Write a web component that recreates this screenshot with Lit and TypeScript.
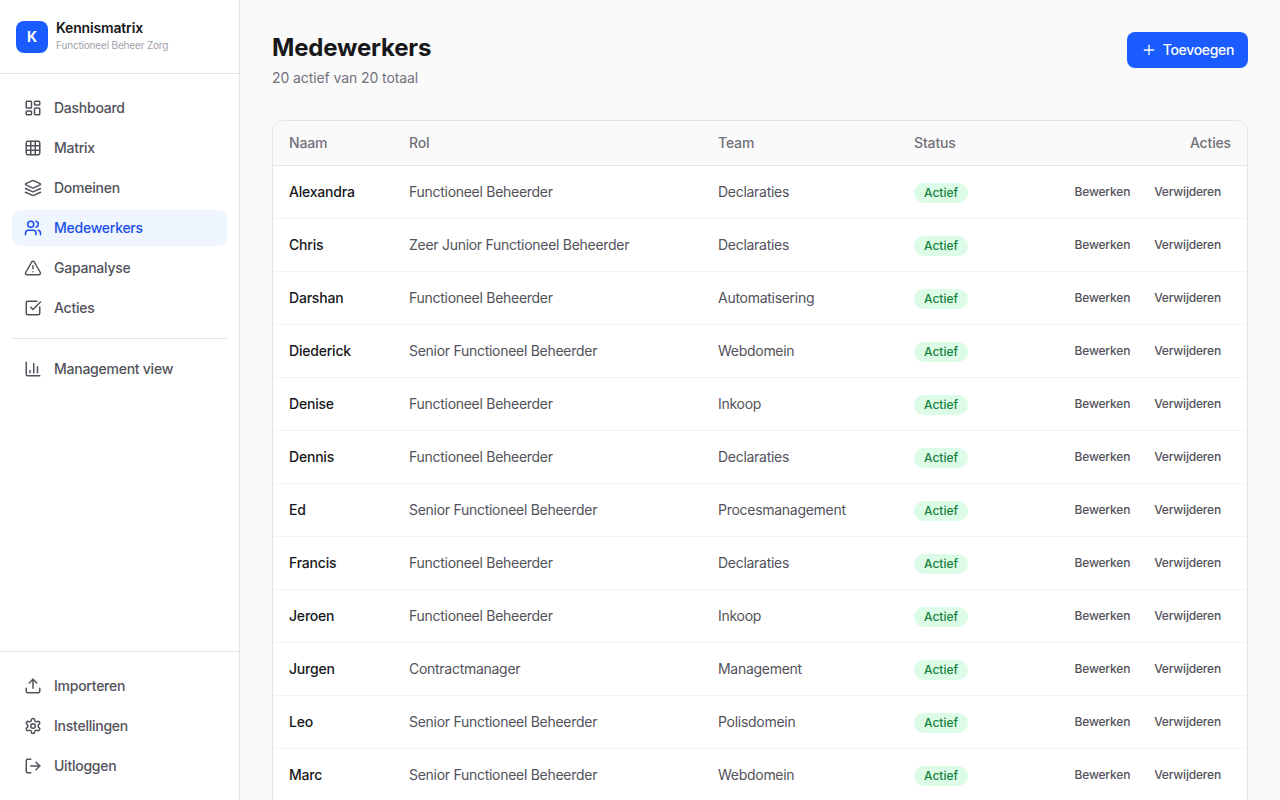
import { LitElement, css, html, svg } from "lit";
import { customElement } from "lit/decorators.js";

const icon = (body: unknown, size = 18) => html`
  <svg class="icon" width=${size} height=${size} viewBox="0 0 24 24" fill="none" stroke="currentColor"
    stroke-width="2" stroke-linecap="round" stroke-linejoin="round">${body}</svg>
`;

const icons = {
  dashboard: svg`<rect x="3" y="3" width="7" height="9" rx="1"/><rect x="14" y="3" width="7" height="5" rx="1"/><rect x="14" y="12" width="7" height="9" rx="1"/><rect x="3" y="16" width="7" height="5" rx="1"/>`,
  grid: svg`<rect x="3" y="3" width="18" height="18" rx="2"/><path d="M3 9h18"/><path d="M3 15h18"/><path d="M9 3v18"/><path d="M15 3v18"/>`,
  layers: svg`<path d="m12.83 2.18a2 2 0 0 0-1.66 0L2.6 6.08a1 1 0 0 0 0 1.83l8.58 3.91a2 2 0 0 0 1.66 0l8.58-3.9a1 1 0 0 0 0-1.83Z"/><path d="m22 17.65-9.17 4.16a2 2 0 0 1-1.66 0L2 17.65"/><path d="m22 12.65-9.17 4.16a2 2 0 0 1-1.66 0L2 12.65"/>`,
  users: svg`<path d="M16 21v-2a4 4 0 0 0-4-4H6a4 4 0 0 0-4 4v2"/><circle cx="9" cy="7" r="4"/><path d="M22 21v-2a4 4 0 0 0-3-3.87"/><path d="M16 3.13a4 4 0 0 1 0 7.75"/>`,
  alert: svg`<path d="m21.73 18-8-14a2 2 0 0 0-3.48 0l-8 14A2 2 0 0 0 4 21h16a2 2 0 0 0 1.73-3"/><path d="M12 9v4"/><path d="M12 17h.01"/>`,
  check: svg`<path d="M21 10.656V19a2 2 0 0 1-2 2H5a2 2 0 0 1-2-2V5a2 2 0 0 1 2-2h12.344"/><path d="m9 11 3 3L22 4"/>`,
  chart: svg`<path d="M3 3v16a2 2 0 0 0 2 2h16"/><path d="M18 17V9"/><path d="M13 17V5"/><path d="M8 17v-3"/>`,
  upload: svg`<path d="M21 15v4a2 2 0 0 1-2 2H5a2 2 0 0 1-2-2v-4"/><polyline points="17 8 12 3 7 8"/><line x1="12" y1="3" x2="12" y2="15"/>`,
  settings: svg`<path d="M12.22 2h-.44a2 2 0 0 0-2 2v.18a2 2 0 0 1-1 1.73l-.43.25a2 2 0 0 1-2 0l-.15-.08a2 2 0 0 0-2.73.73l-.22.38a2 2 0 0 0 .73 2.73l.15.1a2 2 0 0 1 1 1.72v.51a2 2 0 0 1-1 1.74l-.15.09a2 2 0 0 0-.73 2.73l.22.38a2 2 0 0 0 2.73.73l.15-.08a2 2 0 0 1 2 0l.43.25a2 2 0 0 1 1 1.73V20a2 2 0 0 0 2 2h.44a2 2 0 0 0 2-2v-.18a2 2 0 0 1 1-1.73l.43-.25a2 2 0 0 1 2 0l.15.08a2 2 0 0 0 2.73-.73l.22-.39a2 2 0 0 0-.73-2.73l-.15-.08a2 2 0 0 1-1-1.74v-.5a2 2 0 0 1 1-1.74l.15-.09a2 2 0 0 0 .73-2.73l-.22-.38a2 2 0 0 0-2.73-.73l-.15.08a2 2 0 0 1-2 0l-.43-.25a2 2 0 0 1-1-1.73V4a2 2 0 0 0-2-2z"/><circle cx="12" cy="12" r="3"/>`,
  logout: svg`<path d="M9 21H5a2 2 0 0 1-2-2V5a2 2 0 0 1 2-2h4"/><polyline points="16 17 21 12 16 7"/><line x1="21" y1="12" x2="9" y2="12"/>`,
  plus: svg`<path d="M5 12h14"/><path d="M12 5v14"/>`,
};

const employees = [
  ["Alexandra", "Functioneel Beheerder", "Declaraties"],
  ["Chris", "Zeer Junior Functioneel Beheerder", "Declaraties"],
  ["Darshan", "Functioneel Beheerder", "Automatisering"],
  ["Diederick", "Senior Functioneel Beheerder", "Webdomein"],
  ["Denise", "Functioneel Beheerder", "Inkoop"],
  ["Dennis", "Functioneel Beheerder", "Declaraties"],
  ["Ed", "Senior Functioneel Beheerder", "Procesmanagement"],
  ["Francis", "Functioneel Beheerder", "Declaraties"],
  ["Jeroen", "Functioneel Beheerder", "Inkoop"],
  ["Jurgen", "Contractmanager", "Management"],
  ["Leo", "Senior Functioneel Beheerder", "Polisdomein"],
  ["Marc", "Senior Functioneel Beheerder", "Webdomein"],
];

@customElement("app-root")
export class AppRoot extends LitElement {
  static styles = css`
    :host {
      display: flex;
      height: 100vh;
      overflow: hidden;
      background: #fafafa;
      color: #18181b;
      font-family: Inter, "Liberation Sans", sans-serif;
    }
    .sidebar {
      width: 240px;
      flex: none;
      box-sizing: border-box;
      display: flex;
      flex-direction: column;
      background: #fff;
      border-right: 1px solid #e4e4e7;
    }
    .brand {
      display: flex;
      align-items: center;
      gap: 8px;
      height: 74px;
      box-sizing: border-box;
      padding: 0 16px;
      border-bottom: 1px solid #e4e4e7;
    }
    .logo {
      width: 32px;
      height: 32px;
      border-radius: 8px;
      background: #1a5cff;
      color: #fff;
      font-size: 14px;
      font-weight: 700;
      display: flex;
      align-items: center;
      justify-content: center;
    }
    .brand-text {
      padding-bottom: 3px;
    }
    .brand-name {
      font-size: 14px;
      font-weight: 600;
      line-height: 20px;
      letter-spacing: -0.17px;
    }
    .brand-sub {
      font-size: 10px;
      line-height: 14px;
      color: #a1a1aa;
      letter-spacing: -0.17px;
    }
    nav {
      display: flex;
      flex-direction: column;
      gap: 4px;
      padding: 16px 12px;
    }
    nav.main-nav {
      flex: 1;
    }
    nav.bottom-nav {
      border-top: 1px solid #e4e4e7;
    }
    .item {
      display: flex;
      align-items: center;
      gap: 12px;
      height: 36px;
      padding: 0 12px;
      border-radius: 8px;
      font-size: 14px;
      font-weight: 500;
      color: #52525b;
      letter-spacing: -0.25px;
    }
    .item span {
      padding-bottom: 2px;
    }
    .item.active {
      background: #eff6ff;
      color: #1a4fe8;
    }
    .sep {
      height: 1px;
      background: #e4e4e7;
      margin: 8px 0;
    }
    .icon {
      flex: none;
      display: block;
    }
    main {
      flex: 1;
      min-width: 0;
      padding: 32px 32px 0;
      overflow: hidden;
    }
    .head {
      display: flex;
      justify-content: space-between;
      align-items: flex-start;
      margin-bottom: 32px;
    }
    h1 {
      margin: 0;
      font-size: 24px;
      line-height: 32px;
      font-weight: 700;
      letter-spacing: -0.18px;
    }
    .sub {
      margin-top: 4px;
      font-size: 14px;
      line-height: 20px;
      color: #71717a;
      letter-spacing: -0.09px;
    }
    .add {
      display: flex;
      align-items: center;
      gap: 6px;
      height: 36px;
      padding: 0 14px;
      border: 0;
      border-radius: 8px;
      background: #1a5cff;
      color: #fff;
      font: 500 14px Inter, "Liberation Sans", sans-serif;
      letter-spacing: -0.33px;
    }
    .add span {
      padding-bottom: 2px;
    }
    /* the list runs on below the fold, so the card has no visible bottom edge */
    .card {
      background: #fff;
      border: 1px solid #e4e4e7;
      border-bottom: 0;
      border-radius: 12px 12px 0 0;
      overflow: hidden;
    }
    table {
      width: 100%;
      border-collapse: collapse;
      table-layout: fixed;
      font-size: 14px;
    }
    th {
      height: 42px;
      padding: 0 16px 2px;
      text-align: left;
      font-weight: 500;
      color: #71717a;
      background: #fafafa;
      border-bottom: 1px solid #e4e4e7;
      letter-spacing: -0.15px;
    }
    td {
      height: 50px;
      padding: 0 16px 2px;
      color: #52525b;
      border-bottom: 1px solid #f4f4f5;
      letter-spacing: -0.28px;
    }
    td.name {
      font-weight: 500;
      color: #18181b;
      letter-spacing: -0.2px;
    }
    td.status {
      padding: 2px 16px 0;
    }
    td.buttons {
      padding: 0 16px;
    }
    th.right {
      text-align: right;
    }
    .badge {
      display: inline-block;
      padding: 0 10px;
      border-radius: 999px;
      background: #dcfce7;
      color: #15803d;
      font-size: 12px;
      line-height: 20px;
      font-weight: 500;
      vertical-align: middle;
      letter-spacing: 0;
    }
    .actions {
      display: flex;
      justify-content: flex-end;
      gap: 4px;
    }
    .actions button {
      border: 0;
      background: none;
      padding: 4px 10px;
      color: #52525b;
      font: 500 12px/16px Inter, "Liberation Sans", sans-serif;
      letter-spacing: -0.18px;
    }
  `;

  private navItem(name: string, body: unknown, active = false) {
    return html`<div class="item ${active ? "active" : ""}">${icon(body)}<span>${name}</span></div>`;
  }

  render() {
    return html`
      <aside class="sidebar">
        <div class="brand">
          <div class="logo">K</div>
          <div class="brand-text">
            <div class="brand-name">Kennismatrix</div>
            <div class="brand-sub">Functioneel Beheer Zorg</div>
          </div>
        </div>
        <nav class="main-nav">
          ${this.navItem("Dashboard", icons.dashboard)}
          ${this.navItem("Matrix", icons.grid)}
          ${this.navItem("Domeinen", icons.layers)}
          ${this.navItem("Medewerkers", icons.users, true)}
          ${this.navItem("Gapanalyse", icons.alert)}
          ${this.navItem("Acties", icons.check)}
          <div class="sep"></div>
          ${this.navItem("Management view", icons.chart)}
        </nav>
        <nav class="bottom-nav">
          ${this.navItem("Importeren", icons.upload)}
          ${this.navItem("Instellingen", icons.settings)}
          ${this.navItem("Uitloggen", icons.logout)}
        </nav>
      </aside>
      <main>
        <div class="head">
          <div>
            <h1>Medewerkers</h1>
            <div class="sub">20 actief van 20 totaal</div>
          </div>
          <button class="add">${icon(icons.plus, 16)}<span>Toevoegen</span></button>
        </div>
        <div class="card">
          <table>
            <colgroup>
              <col style="width:120px" />
              <col style="width:309px" />
              <col style="width:196px" />
              <col style="width:120px" />
              <col />
            </colgroup>
            <thead>
              <tr>
                <th>Naam</th>
                <th>Rol</th>
                <th>Team</th>
                <th>Status</th>
                <th class="right">Acties</th>
              </tr>
            </thead>
            <tbody>
              ${employees.map(
                ([name, role, team]) => html`
                  <tr>
                    <td class="name">${name}</td>
                    <td>${role}</td>
                    <td>${team}</td>
                    <td class="status"><span class="badge">Actief</span></td>
                    <td class="buttons">
                      <div class="actions">
                        <button>Bewerken</button>
                        <button>Verwijderen</button>
                      </div>
                    </td>
                  </tr>
                `
              )}
            </tbody>
          </table>
        </div>
      </main>
    `;
  }
}
